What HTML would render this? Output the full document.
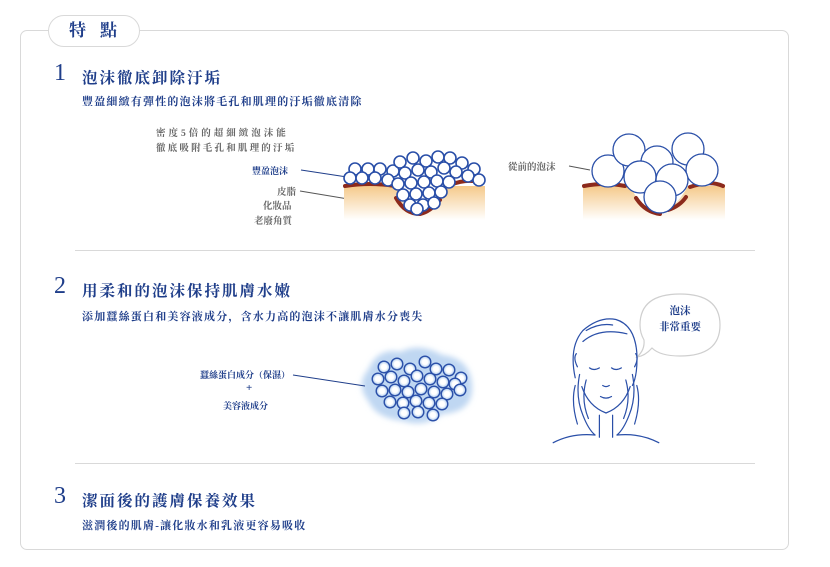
<!DOCTYPE html>
<html><head><meta charset="utf-8"><style>
body{margin:0;width:830px;height:567px;background:#fff;position:relative;overflow:hidden;font-family:"Liberation Serif","Noto Serif CJK SC","Noto Sans CJK TC",serif;}
.a{position:absolute;white-space:nowrap}
.box{position:absolute;left:20px;top:30px;width:767px;height:518px;border:1px solid #d9d9d9;border-radius:7px}
.pill{position:absolute;left:48px;top:15px;width:90px;height:30px;border:1px solid #d9d9d9;border-radius:16px;background:#fff;color:#1f3e8a;font-weight:bold;font-size:17px;text-align:center;line-height:30px;letter-spacing:14px;text-indent:12px}
.num{color:#1f3e8a;font-size:24px;font-family:"Liberation Serif",serif}
.t{color:#1f3e8a;font-size:15.5px;font-weight:bold;letter-spacing:2px}
.s{color:#1f3e8a;font-size:11px;font-weight:bold;letter-spacing:1.2px}
.g{color:#666;font-size:9.5px;letter-spacing:3px;font-weight:bold}
.b{color:#1f3e8a;font-size:9px;font-weight:bold}
.hr{position:absolute;left:75px;width:680px;height:1px;background:#d9d9d9}
</style></head><body>
<div class="box"></div>
<div class="pill">特點</div>

<div class="a num" style="left:54px;top:60px">1</div>
<div class="a t" style="left:82px;top:66px">泡沫徹底卸除汙垢</div>
<div class="a s" style="left:82px;top:93px">豐盈細緻有彈性的泡沫將毛孔和肌理的汙垢徹底清除</div>
<div class="a g" style="left:156px;top:125px">密度5倍的超細緻泡沫能</div>
<div class="a g" style="left:156px;top:140px;letter-spacing:2.2px">徹底吸附毛孔和肌理的汙垢</div>
<div class="a b" style="left:252px;top:164px">豐盈泡沫</div>
<div class="a g" style="left:277px;top:184px;letter-spacing:0">皮脂</div>
<div class="a g" style="left:263px;top:198px;letter-spacing:0">化妝品</div>
<div class="a g" style="left:254px;top:213px;letter-spacing:0">老廢角質</div>
<div class="a g" style="left:508px;top:159px;letter-spacing:0">從前的泡沫</div>

<svg class="a" style="left:0;top:0" width="830" height="567">
<defs>
<linearGradient id="sk" x1="0" y1="0" x2="0" y2="1"><stop offset="0" stop-color="#f5c98a"/><stop offset="1" stop-color="#fff"/></linearGradient>
<radialGradient id="bb"><stop offset="0.45" stop-color="#fff"/><stop offset="1" stop-color="#a8c8ee"/></radialGradient>
<filter id="bl"><feGaussianBlur stdDeviation="3"/></filter>
</defs>
<line x1="301" y1="170" x2="347" y2="177" stroke="#1f3e8a" stroke-width="1"/>
<line x1="300" y1="191" x2="414" y2="210" stroke="#555" stroke-width="1"/>
<line x1="569" y1="166" x2="590" y2="170" stroke="#555" stroke-width="1"/>
<path d="M344 186 H398 Q410 212 420 214 Q432 210 444 186 H485 V220 H344Z" fill="url(#sk)"/>
<path d="M345 186 Q370 182 395 186 M450 185 Q468 178 482 183 M396 198 Q405 214 420 214 Q430 212 440 200" stroke="#8c2a1c" stroke-width="4" fill="none" stroke-linecap="round"/>
<g fill="#fff" stroke="#2a4fa8" stroke-width="1.6">
<circle cx="355" cy="169" r="6"/><circle cx="368" cy="169" r="6"/><circle cx="380" cy="169" r="6"/><circle cx="393" cy="171" r="6"/><circle cx="350" cy="178" r="6"/><circle cx="362" cy="178" r="6"/><circle cx="375" cy="178" r="6"/><circle cx="388" cy="180" r="6"/>
<circle cx="400" cy="162" r="6"/><circle cx="413" cy="158" r="6"/><circle cx="426" cy="161" r="6"/><circle cx="438" cy="157" r="6"/><circle cx="450" cy="158" r="6"/><circle cx="462" cy="163" r="6"/><circle cx="474" cy="169" r="6"/>
<circle cx="405" cy="173" r="6"/><circle cx="418" cy="170" r="6"/><circle cx="431" cy="172" r="6"/><circle cx="444" cy="168" r="6"/><circle cx="456" cy="172" r="6"/><circle cx="468" cy="176" r="6"/><circle cx="479" cy="180" r="6"/>
<circle cx="398" cy="184" r="6"/><circle cx="411" cy="183" r="6"/><circle cx="424" cy="182" r="6"/><circle cx="437" cy="181" r="6"/><circle cx="449" cy="182" r="6"/>
<circle cx="403" cy="195" r="6"/><circle cx="416" cy="194" r="6"/><circle cx="429" cy="193" r="6"/><circle cx="441" cy="192" r="6"/>
<circle cx="410" cy="205" r="6"/><circle cx="423" cy="205" r="6"/><circle cx="434" cy="203" r="6"/><circle cx="417" cy="209" r="6"/>
</g>
<path d="M583 186 H630 Q642 210 657 214 Q675 210 688 186 H725 V220 H583Z" fill="url(#sk)"/>
<path d="M584 186 Q605 182 625 186 M690 187 Q710 180 723 186 M636 198 Q645 212 660 214 M668 210 Q680 206 686 197" stroke="#8c2a1c" stroke-width="4" fill="none" stroke-linecap="round"/>
<g fill="#fff" stroke="#2a4fa8" stroke-width="1.3">
<circle cx="608" cy="171" r="16"/><circle cx="629" cy="150" r="16"/><circle cx="688" cy="149" r="16"/><circle cx="657" cy="162" r="16"/><circle cx="702" cy="170" r="16"/><circle cx="672" cy="180" r="16"/><circle cx="640" cy="177" r="16"/><circle cx="660" cy="197" r="16"/>
</g>
<path d="M368 370 Q378 347 400 352 Q420 342 442 355 Q470 358 472 385 Q474 412 442 414 Q425 428 403 421 Q376 418 369 402 Q355 385 368 370Z" fill="#bfd7f2" filter="url(#bl)"/>
<line x1="293" y1="375" x2="365" y2="386" stroke="#1f3e8a" stroke-width="1"/>
<g fill="url(#bb)" stroke="#2a4fa8" stroke-width="1.4">
<circle cx="384" cy="367" r="5.8"/><circle cx="397" cy="364" r="5.8"/><circle cx="410" cy="369" r="5.8"/><circle cx="425" cy="362" r="5.8"/><circle cx="436" cy="369" r="5.8"/><circle cx="449" cy="370" r="5.8"/><circle cx="461" cy="378" r="5.8"/>
<circle cx="378" cy="379" r="5.8"/><circle cx="391" cy="377" r="5.8"/><circle cx="404" cy="381" r="5.8"/><circle cx="417" cy="376" r="5.8"/><circle cx="430" cy="379" r="5.8"/><circle cx="443" cy="382" r="5.8"/><circle cx="455" cy="384" r="5.8"/>
<circle cx="382" cy="391" r="5.8"/><circle cx="395" cy="390" r="5.8"/><circle cx="408" cy="392" r="5.8"/><circle cx="421" cy="389" r="5.8"/><circle cx="434" cy="392" r="5.8"/><circle cx="447" cy="394" r="5.8"/><circle cx="460" cy="390" r="5.8"/>
<circle cx="390" cy="402" r="5.8"/><circle cx="403" cy="403" r="5.8"/><circle cx="416" cy="401" r="5.8"/><circle cx="429" cy="403" r="5.8"/><circle cx="442" cy="404" r="5.8"/>
<circle cx="404" cy="413" r="5.8"/><circle cx="418" cy="412" r="5.8"/><circle cx="433" cy="415" r="5.8"/>
</g>
<path d="M680 294 Q720 294 720 325 Q720 356 680 356 Q660 356 652 348 Q645 356 637 357 Q645 350 644 340 Q640 333 640 325 Q640 294 680 294Z" fill="#fff" stroke="#cfcfcf" stroke-width="1.2"/>
<g fill="none" stroke="#2a4fa8" stroke-width="1.1" stroke-linecap="round" transform="translate(606 380) scale(1.1) translate(-606 -380)">
<path d="M578 378 Q572 350 585 335 Q600 322 615 325 Q632 330 634 355 Q635 375 630 385"/>
<path d="M588 335 Q600 328 612 330 M585 345 Q600 332 625 338"/>
<path d="M580 368 Q576 360 579 356 M632 368 Q636 360 633 356"/>
<path d="M584 386 Q590 404 606 410 Q622 404 628 386"/>
<path d="M591 369 Q595 372 600 369 M611 369 Q615 372 620 369"/>
<path d="M603 385 Q606 387 609 385 M601 395 Q606 398 611 395"/>
<path d="M582 375 Q578 395 585 412 Q590 425 596 430 M588 380 Q583 398 590 415 M578 385 Q574 400 580 420"/>
<path d="M630 375 Q634 395 627 412 Q622 425 616 430 M624 380 Q629 398 622 415 M634 385 Q638 400 632 420"/>
<path d="M596 430 Q575 428 558 437 M616 430 Q637 428 654 437 M600 412 V432 M612 412 V432"/>
</g>
</svg>

<div class="a" style="left:640px;top:304px;width:80px;text-align:center;color:#1f3e8a;font-size:10.5px;font-weight:bold;line-height:16px">泡沫<br>非常重要</div>

<div class="hr" style="top:250px"></div>
<div class="a num" style="left:54px;top:273px">2</div>
<div class="a t" style="left:82px;top:279px">用柔和的泡沫保持肌膚水嫩</div>
<div class="a s" style="left:82px;top:308px">添加蠶絲蛋白和美容液成分，含水力高的泡沫不讓肌膚水分喪失</div>
<div class="a b" style="left:200px;top:368px">蠶絲蛋白成分（保濕）</div>
<div class="a b" style="left:246px;top:382px;font-size:11px">+</div>
<div class="a b" style="left:223px;top:399px">美容液成分</div>

<div class="hr" style="top:463px"></div>
<div class="a num" style="left:54px;top:483px">3</div>
<div class="a t" style="left:82px;top:489px">潔面後的護膚保養效果</div>
<div class="a s" style="left:82px;top:517px">滋潤後的肌膚-讓化妝水和乳液更容易吸收</div>
</body></html>
